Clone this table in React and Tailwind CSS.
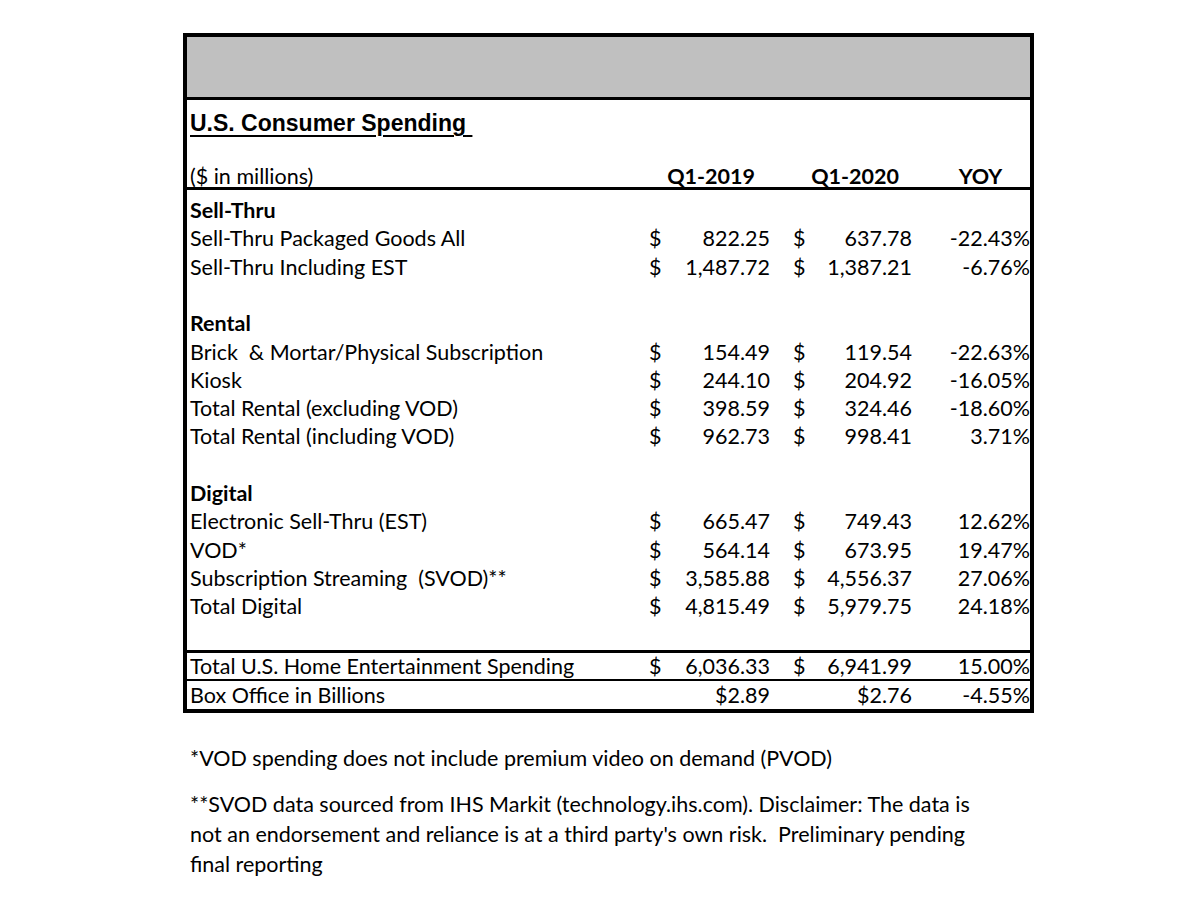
const rows = [
    { type: 'head', label: 'Sell-Thru' },
    { label: 'Sell-Thru Packaged Goods All', a: '822.25', b: '637.78', yoy: '-22.43%' },
    { label: 'Sell-Thru Including EST', a: '1,487.72', b: '1,387.21', yoy: '-6.76%' },
    { type: 'blank' },
    { type: 'head', label: 'Rental' },
    { label: 'Brick  & Mortar/Physical Subscription', a: '154.49', b: '119.54', yoy: '-22.63%' },
    { label: 'Kiosk', a: '244.10', b: '204.92', yoy: '-16.05%' },
    { label: 'Total Rental (excluding VOD)', a: '398.59', b: '324.46', yoy: '-18.60%' },
    { label: 'Total Rental (including VOD)', a: '962.73', b: '998.41', yoy: '3.71%' },
    { type: 'blank' },
    { type: 'head', label: 'Digital' },
    { label: 'Electronic Sell-Thru (EST)', a: '665.47', b: '749.43', yoy: '12.62%' },
    { label: 'VOD*', a: '564.14', b: '673.95', yoy: '19.47%' },
    { label: 'Subscription Streaming  (SVOD)**', a: '3,585.88', b: '4,556.37', yoy: '27.06%' },
    { label: 'Total Digital', a: '4,815.49', b: '5,979.75', yoy: '24.18%' },
    { type: 'blank' },
];

const font = { fontFamily: 'Lato, "Open Sans", sans-serif' };

const DataRow = ({ label, a, b, yoy, dollars = true, className = '' }) => (
    <div className={`flex items-center whitespace-pre ${className}`}>
        <div className="w-[458px] pl-[3px]">{label}</div>
        <div className="w-[20px] pl-[4px]">{dollars ? '$' : ''}</div>
        <div className="w-[105px] text-right">{a}</div>
        <div className="w-[40px] pl-[23px]">{dollars ? '$' : ''}</div>
        <div className="w-[102px] text-right">{b}</div>
        <div className="flex-1 text-right">{yoy}</div>
    </div>
);

export default function App() {
    return (
        <div className="min-h-screen bg-white text-black pt-[33px] pl-[183px]">
            <div className="w-[851px] border-4 border-black text-[21.5px]" style={font}>
                {}
                <div className="h-[63px] bg-[#c0c0c0] border-b-[3px] border-black"></div>

                {}
                <div className="h-[90px] border-b-[3px] border-black flex flex-col">
                    <div className="pl-[3px] pt-[6px] h-[44px]">
                        <span className="font-['Liberation_Sans',Arial,sans-serif] font-bold text-[23px] underline underline-offset-[4px] decoration-2 whitespace-pre">
                            U.S. Consumer Spending{' '}
                        </span>
                    </div>
                    <div className="flex items-center mt-[19px]">
                        <div className="w-[458px] pl-[3px]">($ in millions)</div>
                        <div className="w-[132px] text-center font-bold">Q1-2019</div>
                        <div className="w-[156px] text-center font-bold">Q1-2020</div>
                        <div className="w-[95px] text-center font-bold">YOY</div>
                    </div>
                </div>

                {}
                <div className="pt-[6px] pb-[1px] border-b-[3px] border-black">
                    {rows.map((r, i) => {
                        if (r.type === 'blank') return <div key={i} className="h-[28.3px]"></div>;
                        if (r.type === 'head')
                            return (
                                <div key={i} className="h-[28.3px] flex items-center pl-[3px] font-bold">
                                    {r.label}
                                </div>
                            );
                        return <DataRow key={i} {...r} className="h-[28.3px]" />;
                    })}
                </div>

                {}
                <DataRow
                    label="Total U.S. Home Entertainment Spending"
                    a="6,036.33"
                    b="6,941.99"
                    yoy="15.00%"
                    className="h-[28px] border-b-2 border-black"
                />
                <DataRow label="Box Office in Billions" a="$2.89" b="$2.76" yoy="-4.55%" dollars={false} className="h-[28px]" />
            </div>

            {}
            <div className="pl-[7px] pt-[30px] text-[21.5px] leading-[30px]" style={font}>
                <p className="whitespace-nowrap">*VOD spending does not include premium video on demand (PVOD)</p>
                <p className="whitespace-nowrap mt-[16px]">
                    **SVOD data sourced from IHS Markit (technology.ihs.com). Disclaimer: The data is
                    <br />
                    not an endorsement and reliance is at a third party's own risk.&nbsp; Preliminary pending
                    <br />
                    final reporting
                </p>
            </div>
        </div>
    );
}
